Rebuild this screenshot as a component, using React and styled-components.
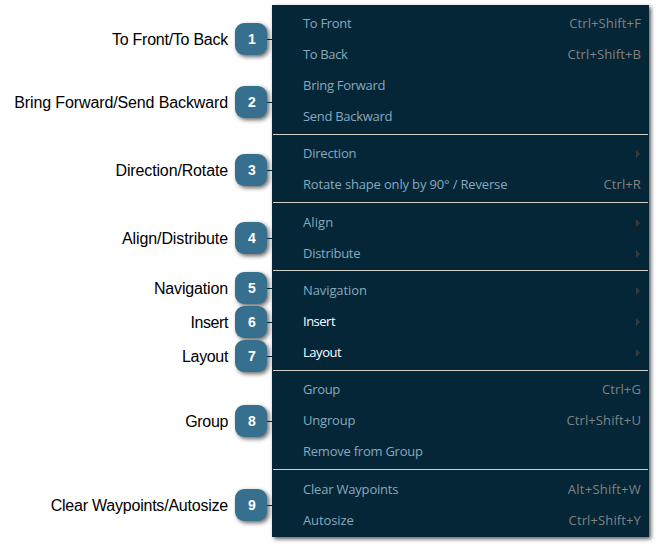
import React from "react";
import styled, { createGlobalStyle } from "styled-components";

const GlobalStyle = createGlobalStyle`
  * { box-sizing: border-box; }
  body { margin: 0; background: #fff; overflow: hidden; }
`;

const Page = styled.main`
  display: flex;
  align-items: flex-start;
  width: 658px;
  height: 546px;
  padding-top: 5px;
  background: #fff;
`;

const Callouts = styled.div`
  width: 272px;
  flex: none;
`;

const Callout = styled.div`
  display: flex;
  align-items: center;
  justify-content: flex-end;
  height: 32px;
  margin-top: ${(p) => p.$gap}px;
`;

const CalloutLabel = styled.span`
  margin-right: 7px;
  padding-top: 2px;
  font: 16px/32px "Liberation Sans", Arial, sans-serif;
  letter-spacing: ${(p) => p.$spacing || 0}px;
  color: #000;
  white-space: nowrap;
`;

const Badge = styled.span`
  width: 32px;
  height: 32px;
  border-radius: 9px;
  background: #37708f;
  box-shadow: 2px 2px 4px rgba(0, 0, 0, 0.6);
  color: #fff;
  font: bold 14px/32px "Liberation Sans", Arial, sans-serif;
  text-align: center;
  padding-left: 2px;
`;

const Connector = styled.span`
  width: 5px;
  height: 1px;
  margin-top: 1px;
  background: #042637;
`;

const Menu = styled.div`
  width: 377px;
  height: 532px;
  flex: none;
  padding: 3px 1px 0;
  background: #042637;
  box-shadow: 2px 2px 4px rgba(0, 0, 0, 0.65);
`;

const Separator = styled.div`
  height: 1px;
  margin: ${(p) => p.$before}px 0 ${(p) => p.$after}px;
  background: #d4d0c8;
`;

const Item = styled.div`
  display: flex;
  align-items: center;
  justify-content: space-between;
  height: 31px;
  padding: 0 7px 0 30px;
  font: 13px/31px "Open Sans", "Noto Sans", sans-serif;
  font-weight: ${(p) => (p.$active ? 500 : 400)};
  color: ${(p) => (p.$active ? "#ffffff" : "#86aabe")};
  white-space: nowrap;
`;

const Name = styled.span`
  letter-spacing: ${(p) => p.$spacing || 0}px;
`;

const Shortcut = styled.span`
  color: #828282;
  letter-spacing: ${(p) => p.$spacing || 0.12}px;
`;

const Arrow = styled.svg`
  width: 4px;
  height: 8px;
  margin: 0 1px 0 0;
  fill: #3c3a39;
`;

const callouts = [
  { label: "To Front/To Back", gap: 18, spacing: -0.25 },
  { label: "Bring Forward/Send Backward", gap: 31, spacing: -0.12 },
  { label: "Direction/Rotate", gap: 36, spacing: -0.14 },
  { label: "Align/Distribute", gap: 36, spacing: -0.1 },
  { label: "Navigation", gap: 18, spacing: -0.15 },
  { label: "Insert", gap: 2, spacing: -0.4 },
  { label: "Layout", gap: 2, spacing: -0.35 },
  { label: "Group", gap: 33, spacing: -0.35 },
  { label: "Clear Waypoints/Autosize", gap: 52, spacing: -0.22 },
];

const entries = [
  { name: "To Front", keys: "Ctrl+Shift+F", spacing: -0.32 },
  { name: "To Back", keys: "Ctrl+Shift+B", spacing: -0.35 },
  { name: "Bring Forward", spacing: -0.27 },
  { name: "Send Backward", spacing: -0.3 },
  { before: 2, after: 3 },
  { name: "Direction", submenu: true, spacing: -0.22 },
  { name: "Rotate shape only by 90° / Reverse", keys: "Ctrl+R", spacing: -0.16 },
  { before: 2, after: 4 },
  { name: "Align", submenu: true, spacing: 0.1 },
  { name: "Distribute", submenu: true, spacing: -0.28 },
  { before: 1, after: 4 },
  { name: "Navigation", submenu: true, spacing: -0.1 },
  { name: "Insert", submenu: true, active: true, spacing: -0.5 },
  { name: "Layout", submenu: true, active: true, spacing: -0.45 },
  { before: 2, after: 3 },
  { name: "Group", keys: "Ctrl+G", spacing: -0.3 },
  { name: "Ungroup", keys: "Ctrl+Shift+U", spacing: -0.2 },
  { name: "Remove from Group", spacing: -0.24 },
  { before: 2, after: 4 },
  { name: "Clear Waypoints", keys: "Alt+Shift+W", spacing: -0.2, keySpacing: 0.25 },
  { name: "Autosize", keys: "Ctrl+Shift+Y", spacing: -0.12 },
];

export default function App() {
  return (
    <>
      <GlobalStyle />
      <Page>
        <Callouts>
          {callouts.map((c, i) => (
            <Callout key={c.label} $gap={c.gap}>
              <CalloutLabel $spacing={c.spacing}>{c.label}</CalloutLabel>
              <Badge>{i + 1}</Badge>
              <Connector />
            </Callout>
          ))}
        </Callouts>
        <Menu>
          {entries.map((e, i) =>
            e.name ? (
              <Item key={i} $active={e.active}>
                <Name $spacing={e.spacing}>{e.name}</Name>
                {e.keys && <Shortcut $spacing={e.keySpacing}>{e.keys}</Shortcut>}
                {e.submenu && (
                  <Arrow viewBox="0 0 4 8">
                    <path d="M0 0L4 4L0 8Z" />
                  </Arrow>
                )}
              </Item>
            ) : (
              <Separator key={i} $before={e.before} $after={e.after} />
            )
          )}
        </Menu>
      </Page>
    </>
  );
}
